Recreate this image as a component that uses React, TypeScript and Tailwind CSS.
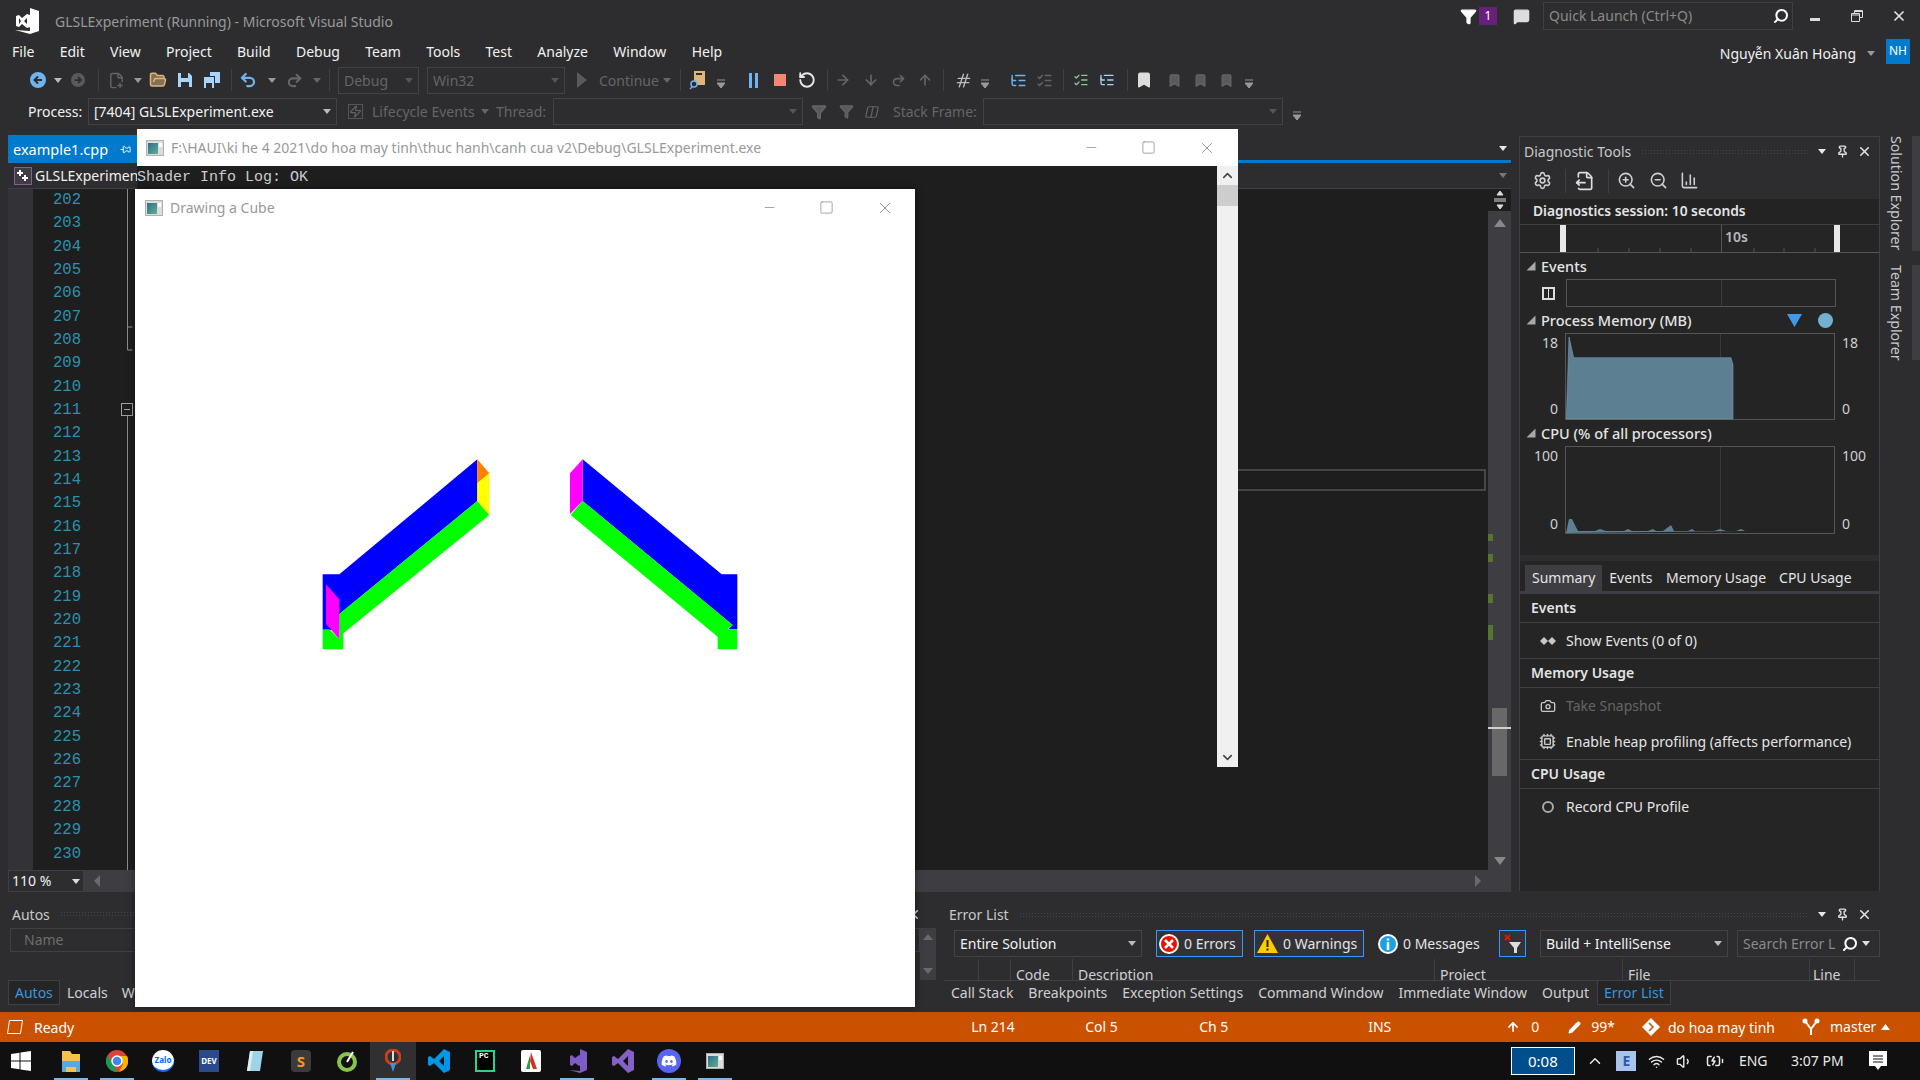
import React from 'react';
import { Settings, ZoomIn, ZoomOut, Search, Undo2, Redo2, RotateCcw, ArrowRight, ArrowDown, ArrowUp, Bookmark, Filter, Pin, X, Minus, Square, FolderOpen, FilePlus2, ChevronUp, ChevronDown, Wifi, Volume1, Pencil, ListTree, ListChecks, Hash, Camera, Cpu, BarChart3, FileOutput, MessageSquare, Columns2, BatteryCharging, Zap } from 'lucide-react';
import { FaDiscord } from 'react-icons/fa6';

const UI = "font-['Noto_Sans',sans-serif]";
const MONO = "font-['Liberation_Mono',monospace]";

const Dd = ({ c = '', color = '#c8c8c8' }: { c?: string; color?: string }) => (
    <svg width="8" height="5" viewBox="0 0 8 5" className={`shrink-0 ${c}`}><path d="M0 0h8L4 5z" fill={color} /></svg>
);
const TbDd = ({ c = '' }: { c?: string }) => (
    <svg width="8" height="10" viewBox="0 0 8 10" className={`shrink-0 mt-2 ${c}`}><path d="M0 1h8M0 4h8L4 9z" stroke="#999" fill="#999" strokeWidth="1" /></svg>
);
const Sep = ({ c = '' }: { c?: string }) => <div className={`w-px h-[22px] bg-[#3f3f46] shrink-0 ${c}`} />;
const Slot = ({ c = '', children }: { c?: string; children: React.ReactNode }) => (
    <div className={`w-5 h-5 flex items-center justify-center shrink-0 ${c}`}>{children}</div>
);
const Combo = ({ c = '', text, dim = false }: { c?: string; text?: string; dim?: boolean }) => (
    <div className={`h-[27px] border border-[#434346] flex items-center justify-between pl-[5px] pr-[5px] shrink-0 ${dim ? 'text-[#656565]' : 'text-[#f1f1f1]'} ${c}`}>
        <span className="whitespace-nowrap leading-normal">{text}</span>
        <Dd color={dim ? '#555' : '#bbb'} />
    </div>
);
const AppGlyph = ({ c = '' }: { c?: string }) => (
    <svg width="18" height="16" viewBox="0 0 18 16" className={c}>
        <defs>
            <linearGradient id="glyph" x1="0" x2="1" y1="0" y2="1"><stop offset="0" stopColor="#2f6f8f" /><stop offset="1" stopColor="#5fae8f" /></linearGradient>
        </defs>
        <rect x="0.500" y="0.500" width="17" height="15" fill="#dcdcdc" stroke="#b0b0b0" />
        <rect x="2" y="3" width="10" height="11" fill="url(#glyph)" />
        <rect x="13" y="3" width="3" height="4" fill="#fff" />
    </svg>
);
const WinControls = ({ c = '' }: { c?: string }) => (
    <div className={`flex items-center gap-[42px] text-[#8a8a8a] ${c}`}>
        <Minus size={15} strokeWidth={1.200} />
        <Square size={15} strokeWidth={1.200} />
        <X size={18} strokeWidth={1.200} />
    </div>
);
const Triangle = () => (
    <svg width="10" height="10" viewBox="0 0 10 10" className="shrink-0"><path d="M9.500 0.500v9h-9z" fill="#a8a8a8" /></svg>
);
const PanelHead = ({ title, c = '' }: { title: string; c?: string }) => (
    <div className={`flex items-center text-[#e0e0e0] ${c}`}>
        <span className="text-[14px] text-[#c8c8c8] whitespace-nowrap leading-normal">{title}</span>
        <div className="flex-1 mx-[10px] h-[6px] bg-[radial-gradient(#46464a_1px,transparent_1px)] bg-[length:3px_3px]" />
        <Dd c="mr-[10px]" color="#e8e8e8" />
        <Pin size={13} strokeWidth={2.500} className="mr-[8px]" />
        <X size={15} strokeWidth={2.500} />
    </div>
);
const Section = ({ title }: { title: string }) => (
    <div className="h-[29px] border-b border-[#3f3f46] flex items-center pl-[11px] font-semibold text-[14px] text-[#e4e4e4]">{title}</div>
);
const Action = ({ text, icon, dim = false, c = '' }: { text: string; icon: React.ReactNode; dim?: boolean; c?: string }) => (
    <div className={`flex items-center h-[36px] pl-[19px] text-[14px] ${dim ? 'text-[#656565]' : 'text-[#e4e4e4]'} ${c}`}>
        <div className="w-[17px] flex justify-center text-[#c8c8c8] mr-[10px]">{icon}</div>
        {text}
    </div>
);
const Label = ({ text, children }: { text: string; children?: React.ReactNode }) => (
    <div className="flex items-center h-[26px] pl-[6px] gap-[5px] text-[#e4e4e4] text-[14.500px] font-medium"><Triangle />{text}{children}</div>
);
const TbIcon = ({ children, bar = false, active = false, c = '' }: { children: React.ReactNode; bar?: boolean; active?: boolean; c?: string }) => (
    <div className={`relative w-[46px] h-[38px] flex items-center justify-center ${active ? 'bg-[#303032]' : ''} ${c}`}>
        {children}
        {bar && <div className="absolute bottom-0 left-[6px] right-[6px] h-[2px] bg-[#76b9ed]" />}
    </div>
);

const LINES = Array.from({ length: 29 }, (_, i) => 202 + i);

const ErrBtn = ({ c, border = true, children }: { c: string; border?: boolean; children: React.ReactNode }) => (
    <div className={`h-[27px] flex items-center shrink-0 text-[#e4e4e4] ${border ? 'border border-[#3399ff] bg-[#333337]' : ''} ${c}`}>{children}</div>
);

export default function App() {
    return (
        <div className={`w-[1920px] h-[1080px] overflow-hidden relative bg-[#2d2d30] flex flex-col text-[14px] leading-none ${UI}`}>
            {/* title bar */}
            <div className="h-[36px] flex items-center shrink-0 pb-[4px]">
                <svg width="30" height="28" viewBox="0 0 30 28" className="ml-[12px] mt-[10px]">
                    <path d="M18 1l9 3v20l-9 3-15-4 15 1zM4 9l3-1 3 3 5-4 3 1v12l-3 1-5-4-3 3-3-1zM7 11v6l2-3zM15 11l-3 3 3 3z" fill="#fff" fillRule="evenodd" />
                </svg>
                <span className="ml-[13px] mt-[12px] text-[14px] text-[#999]">GLSLExperiment (Running) - Microsoft Visual Studio</span>
                <Filter size={17} fill="#fff" color="#fff" className="ml-auto mr-[2px]" />
                <div className="w-[18px] h-[18px] bg-[#68217a] text-white flex items-center justify-center text-[12px] mr-[16px]">1</div>
                <MessageSquare size={17} fill="#ddd" color="#ddd" className="mr-[13px]" />
                <div className="w-[250px] h-[28px] border border-[#3f3f46] flex items-center justify-between pl-[5px] pr-[3px] text-[#8a8a8a]">
                    Quick Launch (Ctrl+Q)
                    <Search size={16} color="#fff" strokeWidth={3} className="-scale-x-100" />
                </div>
                <div className="w-[10px] h-[3px] bg-[#ddd] ml-[17px] mt-[7px]" />
                <svg width="12" height="12" viewBox="0 0 12 12" className="ml-[31px]"><path d="M3.500 3V.500h8v7H9M.500 3.500h8v8h-8zM.500 5h8M3.500 1.500h8" fill="none" stroke="#ddd" /></svg>
                <X size={16} color="#e8e8e8" strokeWidth={2.500} className="ml-[28px] mr-[13px]" />
            </div>
            {/* menu */}
            <div className="h-[30px] flex items-center shrink-0 text-[#f1f1f1] pl-[12px]">
                {['File', 'Edit', 'View', 'Project', 'Build', 'Debug', 'Team', 'Tools', 'Test', 'Analyze', 'Window', 'Help'].map(m => (
                    <span key={m} className="mr-[25.300px] leading-normal">{m}</span>
                ))}
                <span className="ml-auto mt-[5px] leading-normal">Nguyễn Xuân Hoàng</span>
                <Dd c="ml-[11px] mt-[5px]" color="#999" />
                <div className="w-[24px] h-[25px] bg-[#007acc] text-white text-[12px] flex items-center justify-center ml-[11px] mr-[10px]">NH</div>
            </div>
            {/* toolbar 1 */}
            <div className="h-[30px] flex items-center shrink-0 text-[#656565] pb-[2px]">
                <Slot c="ml-[28px]"><svg width="16" height="16" viewBox="0 0 16 16"><circle cx="8" cy="8" r="8" fill="#6fb4ee" /><path d="M12 8H5M8 4.500 4.500 8 8 11.500" stroke="#2d2d30" strokeWidth="2" fill="none" /></svg></Slot>
                <Dd c="ml-[6px]" color="#bbb" />
                <Slot c="ml-[6px]"><svg width="14" height="14" viewBox="0 0 16 16"><circle cx="8" cy="8" r="8" fill="#5a5a5a" /><path d="M4 8h7M8 4.500 11.500 8 8 11.500" stroke="#2d2d30" strokeWidth="2" fill="none" /></svg></Slot>
                <Sep c="ml-[10px]" />
                <Slot c="ml-[7px]"><FilePlus2 size={17} /></Slot>
                <Dd c="ml-[8px]" color="#999" />
                <Slot c="ml-[6px]"><FolderOpen size={18} color="#dcb67a" fill="#dcb67a" fillOpacity={0.500} /></Slot>
                <Slot c="ml-[7px]"><svg width="16" height="16" viewBox="0 0 16 16"><path d="M1 1h11l3 3v11H1z" fill="#a6d4fa" /><path d="M4 1h7v5H4zM4 10h8v5H4z" fill="#2d2d30" /></svg></Slot>
                <Slot c="ml-[7px]"><svg width="18" height="18" viewBox="0 0 18 18"><path d="M1 6h10v11H1z" fill="#a6d4fa" /><path d="M3 12h6v5H3z" fill="#2d2d30" /><path d="M7 1h10v11h-5V5H7z" fill="#a6d4fa" /></svg></Slot>
                <Sep c="ml-[9px]" />
                <Slot c="ml-[6px]"><Undo2 size={18} color="#6fb4ee" strokeWidth={3} /></Slot>
                <Dd c="ml-[10px]" color="#999" />
                <Slot c="ml-[8px]"><Redo2 size={17} strokeWidth={3} /></Slot>
                <Dd c="ml-[9px]" color="#666" />
                <Sep c="ml-[8px]" />
                <Combo c="ml-[8px] w-[81px]" text="Debug" dim />
                <Combo c="ml-[8px] w-[138px]" text="Win32" dim />
                <svg width="12" height="16" viewBox="0 0 12 16" className="ml-[11px]"><path d="M1 0l10 8-10 8z" fill="#5a5a5a" /></svg>
                <span className="ml-[11px] w-[59px] leading-normal">Continue</span>
                <Dd c="ml-[5px]" color="#666" />
                <Sep c="ml-[9px]" />
                <Slot c="ml-[7px]"><svg width="18" height="20" viewBox="0 0 18 20"><path d="M5 1h11v14H5z" fill="#dcb67a" /><path d="M7 3h6v2H7z" fill="#2d2d30" /><circle cx="5" cy="14" r="3" fill="#2d2d30" stroke="#6fb4ee" strokeWidth="1.500" /><path d="M3 17l-2 2" stroke="#6fb4ee" strokeWidth="1.500" /></svg></Slot>
                <TbDd c="ml-[9px]" />
                <div className="ml-[18px] w-5 flex justify-center gap-[3px]"><div className="w-[3px] h-[15px] bg-[#6fb4ee]" /><div className="w-[3px] h-[15px] bg-[#6fb4ee]" /></div>
                <div className="ml-[11px] mr-[4px] w-[12px] h-[12px] bg-[#f48771]" />
                <Slot c="ml-[7px]"><RotateCcw size={18} color="#e8e8e8" strokeWidth={2.500} /></Slot>
                <Sep c="ml-[10px]" />
                <Slot c="ml-[5px]"><ArrowRight size={16} strokeWidth={2.500} /></Slot>
                <Slot c="ml-[8px]"><ArrowDown size={16} strokeWidth={2.500} /></Slot>
                <Slot c="ml-[7px]"><Redo2 size={15} strokeWidth={2.500} /></Slot>
                <Slot c="ml-[7px]"><ArrowUp size={16} strokeWidth={2.500} /></Slot>
                <Sep c="ml-[8px]" />
                <Slot c="ml-[9px]"><Hash size={17} color="#bbb" className="-skew-x-12" /></Slot>
                <TbDd c="ml-[8px]" />
                <Slot c="ml-[19px]"><ListTree size={17} color="#6fb4ee" /></Slot>
                <Slot c="ml-[6px]"><ListChecks size={17} /></Slot>
                <Sep c="ml-[9px]" />
                <Slot c="ml-[7px]"><ListChecks size={16} color="#8fc48f" /></Slot>
                <Slot c="ml-[6px]"><ListTree size={16} color="#a6d4fa" /></Slot>
                <Sep c="ml-[10px]" />
                <Slot c="ml-[6px]"><Bookmark size={18} fill="#ddd" color="#ddd" /></Slot>
                <Slot c="ml-[10px]"><Bookmark size={15} fill="#5a5a5a" /></Slot>
                <Slot c="ml-[6px]"><Bookmark size={15} fill="#5a5a5a" /></Slot>
                <Slot c="ml-[6px]"><Bookmark size={15} fill="#5a5a5a" /></Slot>
                <TbDd c="ml-[9px]" />
            </div>
            {/* toolbar 2 */}
            <div className="h-[31px] flex items-center shrink-0 text-[#656565]">
                <span className="ml-[28px] w-[52px] text-[#f1f1f1] leading-normal">Process:</span>
                <Combo c="ml-[8px] w-[249px]" text="[7404] GLSLExperiment.exe" />
                <Slot c="ml-[8px]"><Zap size={15} className="border border-[#555]" /></Slot>
                <span className="ml-[7px] w-[103px] whitespace-nowrap leading-normal">Lifecycle Events</span>
                <Dd c="ml-[6px]" color="#666" />
                <span className="ml-[7px] w-[49px] leading-normal">Thread:</span>
                <Combo c="ml-[8px] w-[250px]" dim />
                <Slot c="ml-[6px]"><Filter size={16} fill="#5a5a5a" /></Slot>
                <Slot c="ml-[7px]"><Filter size={15} fill="#5a5a5a" /></Slot>
                <Slot c="ml-[6px]"><Columns2 size={14} className="-skew-x-12" /></Slot>
                <span className="ml-[11px] w-[82px] whitespace-nowrap leading-normal">Stack Frame:</span>
                <Combo c="ml-[8px] w-[300px]" dim />
                <TbDd c="ml-[10px]" />
            </div>
            {/* workspace */}
            <div className="flex-1 flex min-h-0">
                <div className="w-[1880px] flex flex-col">
                    <div className="h-[773px] flex shrink-0">
                        {/* document well */}
                        <div className="w-[1503px] ml-[8px] flex flex-col">
                            <div className="h-[36px] flex items-end border-b-[3px] border-[#007acc] pr-[4px]">
                                <div className="w-[129px] h-[25px] bg-[#007acc] text-white flex items-center pl-[5px] pt-[4px] text-[14.500px]">
                                    <span className="leading-normal">example1.cpp</span>
                                    <Pin size={11} className="ml-[12px] rotate-90" />
                                </div>
                                <Dd c="ml-auto mb-[9px]" color="#e8e8e8" />
                            </div>
                            <div className="h-[26px] flex items-center border-b border-[#3f3f46] pr-[4px] text-[#f1f1f1]">
                                <svg width="18" height="18" viewBox="0 0 18 18" className="ml-[6px]"><rect x="0.500" y="0.500" width="17" height="17" fill="#3e3e42" stroke="#8a5a9a" /><path d="M6 3v6M3 6h6M11 8v6M8 11h6" stroke="#fff" strokeWidth="2" /></svg>
                                <span className="ml-[3px] leading-normal">GLSLExperiment</span>
                                <Dd c="ml-auto" color="#777" />
                            </div>
                            <div className="h-[681px] flex bg-[#1e1e1e]">
                                <div className="w-[25px] bg-[#333337]" />
                                <div className={`w-[48px] text-[15.600px] text-[#2b91af] text-right ${MONO}`}>
                                    {LINES.map(n => <div key={n} className="h-[23.350px] flex items-center justify-end">{n}</div>)}
                                </div>
                                <svg width="60" height="681" viewBox="0 0 60 681" className="shrink-0">
                                    <path d="M46.500 0v161h5M46.500 138h5M46.500 227v454" stroke="#8a8a8a" fill="none" />
                                    <rect x="40.500" y="214.500" width="11" height="12" stroke="#a0a0a0" fill="none" />
                                    <path d="M43 220.500h6" stroke="#a0a0a0" />
                                </svg>
                                <div className="flex-1 flex flex-col">
                                    <div className="h-[280px]" />
                                    <div className="h-[22px] border-2 border-[#464646] mr-[2px]" />
                                </div>
                                <div className="w-[23px] bg-[#3e3e42] flex flex-col items-center relative">
                                    <div className="w-full h-[22px] bg-[#1e1e1e] flex items-center justify-center"><svg width="12" height="20" viewBox="0 0 12 20"><path d="M6 1l3 4H3zM6 19l3-4H3zM0 9h12M0 11h12" stroke="#ddd" fill="#ddd" /></svg></div>
                                    <svg width="12" height="8" viewBox="0 0 12 8" className="mt-[8px]"><path d="M6 0l6 8H0z" fill="#888" /></svg>
                                    <div className="w-[15px] h-[68px] bg-[#686868] mt-[481px]" />
                                    <svg width="12" height="8" viewBox="0 0 12 8" className="mt-[81px]"><path d="M6 8l6-8H0z" fill="#888" /></svg>
                                    {/* overview marks */}
                                    <div className="absolute left-0 top-[345px] w-[5px] h-[7px] bg-[#577430]" />
                                    <div className="absolute left-0 top-[365px] w-[5px] h-[8px] bg-[#577430]" />
                                    <div className="absolute left-0 top-[405px] w-[5px] h-[9px] bg-[#577430]" />
                                    <div className="absolute left-0 top-[436px] w-[5px] h-[15px] bg-[#577430]" />
                                    <div className="absolute left-0 top-[538px] w-full h-[2px] bg-[#d0d0d0]" />
                                </div>
                            </div>
                            <div className="h-[22px] bg-[#3e3e42] flex items-center relative">
                                <div className="w-[76px] h-full bg-[#2d2d30] border border-[#3f3f46] text-[#f1f1f1] flex items-center justify-between px-[3px]">110 %<Dd color="#ddd" /></div>
                                <svg width="6" height="12" viewBox="0 0 6 12" className="ml-[10px]"><path d="M6 0v12L0 6z" fill="#6a6a6a" /></svg>
                                <svg width="6" height="12" viewBox="0 0 6 12" className="ml-auto mr-[30px]"><path d="M0 0v12l6-6z" fill="#6a6a6a" /></svg>
                            </div>
                        </div>
                        {/* diagnostic tools */}
                        <div className="w-[361px] ml-[8px] mt-[9px] mb-[9px] bg-[#252526] border-x border-[#3f3f46] flex flex-col">
                            <div className="bg-[#2d2d30] border-t border-[#3f3f46] pl-[4px] pr-[7px] pb-[1px]"><PanelHead title="Diagnostic Tools" c="h-[29px]" /></div>
                            <div className="h-[32px] bg-[#2d2d30] flex items-center text-[#d0d0d0] pb-[5px]">
                                <Settings size={19} className="ml-[13px]" />
                                <div className="w-px h-[24px] bg-[#3f3f46] ml-[13px]" />
                                <FileOutput size={20} color="#ddd" className="ml-[9px]" />
                                <div className="w-px h-[24px] bg-[#3f3f46] ml-[13px]" />
                                <ZoomIn size={19} className="ml-[8px]" />
                                <ZoomOut size={19} className="ml-[13px]" />
                                <BarChart3 size={19} className="ml-[12px]" />
                            </div>
                            <div className="h-[26px] bg-[#232324] flex items-center pl-[13px] pb-[1px] font-semibold text-[13.800px] text-[#e4e4e4] border-b border-[#3f3f46]">Diagnostics session: 10 seconds</div>
                            <div className="h-[28px] flex border-b border-[#555] relative">
                                <div className="w-[6px] h-full bg-[#e8e8e8] ml-[40px]" />
                                <div className="w-px bg-[#555] ml-[155px]" />
                                <span className="ml-[3px] mt-[5px] text-[14px] font-semibold text-[#b8b8b8]">10s</span>
                                <div className="w-[6px] h-full bg-[#e8e8e8] ml-[86px]" />
                                <svg width="361" height="4" viewBox="0 0 361 4" className="absolute left-0 bottom-0"><path d="M78 0v4M109 0v4M140 0v4M171 0v4M234 0v4M264 0v4M295 0v4" stroke="#555" /></svg>
                            </div>
                            <Label text="Events" />
                            <div className="flex items-center">
                                <svg width="13" height="13" viewBox="0 0 13 13" className="ml-[22px]"><rect x="1" y="1" width="11" height="11" fill="none" stroke="#ddd" strokeWidth="2" /><path d="M6.500 1v11" stroke="#ddd" /></svg>
                                <div className="ml-[11px] w-[270px] h-[28px] border border-[#555] flex"><div className="w-[155px] border-r border-[#3a3a3a]" /></div>
                            </div>
                            <Label text="Process Memory (MB)">
                                <svg width="15" height="13" viewBox="0 0 15 13" className="ml-auto"><path d="M0 0h15l-7.500 13z" fill="#3d9bee" /></svg>
                                <div className="w-[15px] h-[15px] rounded-full bg-[#76b0d0] ml-[11px] mr-[46px]" />
                            </Label>
                            <div className="flex">
                                <div className="w-[45px] h-[86px] flex flex-col justify-between items-end pr-[7px] py-[3px] text-[14px] text-[#d0d0d0]"><span>18</span><span>0</span></div>
                                <svg width="270" height="87" viewBox="0 0 270 87" className="shrink-0">
                                    <rect x="0.500" y="0.500" width="269" height="86" fill="#242425" stroke="#555" />
                                    <path d="M155.500 1v85" stroke="#3a3a3a" />
                                    <path d="M1.300 86 4 4l4.700 20.700H166l2 7V86z" fill="#5c7f92" stroke="#7d9bac" strokeWidth="0.600" />
                                </svg>
                                <div className="pl-[7px] h-[86px] flex flex-col justify-between py-[3px] text-[14px] text-[#d0d0d0]"><span>18</span><span>0</span></div>
                            </div>
                            <Label text="CPU (% of all processors)" />
                            <div className="flex">
                                <div className="w-[45px] h-[88px] flex flex-col justify-between items-end pr-[7px] py-[3px] text-[14px] text-[#d0d0d0]"><span>100</span><span>0</span></div>
                                <svg width="270" height="88" viewBox="0 0 270 88" className="shrink-0">
                                    <rect x="0.500" y="0.500" width="269" height="87" fill="#242425" stroke="#555" />
                                    <path d="M155.500 1v86" stroke="#3a3a3a" />
                                    <path d="M1 87l3-14 3 0 6 12h17l5-2 6 2h18l4-2 4 2h16l5-2 3 2h7l8-6 3 6h14l4-2 3 2h19l6-2 6 2h10l5-2 4 2v0z" fill="#5c7f92" />
                                </svg>
                                <div className="pl-[7px] h-[88px] flex flex-col justify-between py-[3px] text-[14px] text-[#d0d0d0]"><span>100</span><span>0</span></div>
                            </div>
                            <div className="h-[27px] border-b-[6px] border-[#2d2d30]" />
                            <div className="h-[33px] flex items-end pl-[5px] border-b-[3px] border-[#3e3e42] text-[14px] text-[#e4e4e4]">
                                <span className="bg-[#3e3e42] h-[26px] flex items-center px-[7px]">Summary</span>
                                <span className="h-[26px] flex items-center px-[7px]">Events</span>
                                <span className="h-[26px] flex items-center px-[6.500px]">Memory Usage</span>
                                <span className="h-[26px] flex items-center px-[6.500px]">CPU Usage</span>
                            </div>
                            <Section title="Events" />
                            <Action text="Show Events (0 of 0)" c="border-b border-[#3f3f46]" icon={<svg width="16" height="8" viewBox="0 0 16 8"><path d="M0 4l4-4 4 4 4-4 4 4-4 4-4-4-4 4z" fill="#c8c8c8" /></svg>} />
                            <Section title="Memory Usage" />
                            <Action text="Take Snapshot" dim icon={<Camera size={16} />} />
                            <Action text="Enable heap profiling (affects performance)" c="border-b border-[#3f3f46] h-[35px]" icon={<Cpu size={17} />} />
                            <Section title="CPU Usage" />
                            <Action text="Record CPU Profile" icon={<div className="w-[12px] h-[12px] rounded-full border-2 border-[#a8a8a8]" />} />
                        </div>
                    </div>
                    {/* bottom panels */}
                    <div className="flex-1 flex">
                        <div className="w-[928px] ml-[8px] flex flex-col relative">
                            <PanelHead title="Autos" c="pr-[15px] pl-[4px] h-[28px]" />
                            <div className="flex h-[52px]">
                                <div className="flex-1"><div className="h-[24px] border border-[#3f3f46] ml-[2px] flex items-center pl-[13px] text-[#6d6d6d]">Name</div></div>
                                <div className="w-[16px] bg-[#3e3e42] flex flex-col items-center justify-between py-[6px]">
                                    <svg width="10" height="6" viewBox="0 0 10 6"><path d="M5 0l5 6H0z" fill="#6a6a6a" /></svg>
                                    <svg width="10" height="6" viewBox="0 0 10 6"><path d="M5 6l5-6H0z" fill="#6a6a6a" /></svg>
                                </div>
                            </div>
                            <div className="h-[25px] flex items-center text-[#d0d0d0]">
                                <span className="w-[52px] h-full border border-[#3f3f46] bg-[#252526] text-[#3a96dd] flex items-center pl-[6px]">Autos</span>
                                <span className="ml-[7px]">Locals</span>
                                <span className="ml-[14px]">Watch 1</span>
                            </div>
                        </div>
                        <div className="w-[936px] ml-[8px] flex flex-col">
                            <PanelHead title="Error List" c="pr-[8px] pl-[5px] h-[29px]" />
                            <div className="h-[29px] flex items-center">
                                <Combo c="ml-[10px] w-[188px]" text="Entire Solution" />
                                <ErrBtn c="ml-[14px] w-[87px] pl-[2px] gap-[5px]"><svg width="20" height="20" viewBox="0 0 20 20"><circle cx="10" cy="10" r="10" fill="#fff" /><circle cx="10" cy="10" r="8" fill="#e51400" /><path d="M6 6l8 8M14 6l-8 8" stroke="#fff" strokeWidth="2.500" /></svg>0 Errors</ErrBtn>
                                <ErrBtn c="ml-[11px] w-[110px] pl-[2px] gap-[5px]"><svg width="21" height="19" viewBox="0 0 21 19"><path d="M10.500 0 21 19H0z" fill="#ffcc00" /><path d="M10.500 6v7M10.500 14.500v2" stroke="#222" strokeWidth="2" /></svg>0 Warnings</ErrBtn>
                                <ErrBtn border={false} c="ml-[14px] w-[103px] gap-[5px]"><svg width="20" height="20" viewBox="0 0 20 20"><circle cx="10" cy="10" r="10" fill="#fff" /><circle cx="10" cy="10" r="8" fill="#1ba1e2" /><path d="M10 4.500v2M10 8v8" stroke="#fff" strokeWidth="2.500" /></svg>0 Messages</ErrBtn>
                                <ErrBtn c="ml-[18px] w-[27px] justify-center"><svg width="17" height="19" viewBox="0 0 17 19"><path d="M1 1l5 5M6 1 1 6" stroke="#e51400" strokeWidth="2" /><path d="M5 8h12l-4 6v5h-3v-5z" fill="#ddd" /></svg></ErrBtn>
                                <Combo c="ml-[14px] w-[188px]" text="Build + IntelliSense" />
                                <div className="ml-[9px] flex-1 h-[27px] border border-[#434346] flex items-center pl-[5px] text-[#8a8a8a] whitespace-nowrap">Search Error L<Search size={16} color="#fff" strokeWidth={3} className="ml-[7px] shrink-0 -scale-x-100" /><Dd c="ml-[4px]" color="#ddd" /></div>
                            </div>
                            <div className="h-[22px] mt-[1px] flex overflow-hidden text-[#d0d0d0] border-b border-[#3f3f46]">
                                <div className="w-[35px] border-r border-[#3f3f46]" />
                                <div className="w-[32px] border-r border-[#3f3f46]" />
                                <div className="w-[62px] border-r border-[#3f3f46] pl-[5px] pt-[9px]">Code</div>
                                <div className="w-[362px] border-r border-[#3f3f46] pl-[5px] pt-[9px]">Description</div>
                                <div className="w-[188px] border-r border-[#3f3f46] pl-[5px] pt-[9px]">Project</div>
                                <div className="w-[187px] border-r border-[#3f3f46] pl-[5px] pt-[9px]">File</div>
                                <div className="w-[45px] border-r border-[#3f3f46] pl-[3px] pt-[9px]">Line</div>
                            </div>
                            <div className="h-[24px] flex items-center text-[#d0d0d0] pl-[7px] gap-[15px] whitespace-nowrap">
                                <span>Call Stack</span><span>Breakpoints</span><span>Exception Settings</span><span>Command Window</span><span>Immediate Window</span><span>Output</span>
                                <span className="h-full flex items-center px-[6px] -ml-[7px] bg-[#252526] border-x border-b border-[#3f3f46] text-[#3a96dd]">Error List</span>
                            </div>
                        </div>
                    </div>
                </div>
                <div className="flex-1 flex flex-col items-start pt-[9px] text-[#c8c8c8] text-[14.200px] leading-normal">
                    <div className="h-[115px] w-full flex">
                        <span className="flex-1 [writing-mode:vertical-rl] whitespace-nowrap flex items-center justify-start">Solution Explorer</span>
                        <div className="w-[8px] bg-[#3e3e42]" />
                    </div>
                    <div className="h-[95px] w-full flex mt-[14px]">
                        <span className="flex-1 [writing-mode:vertical-rl] whitespace-nowrap flex items-center justify-start">Team Explorer</span>
                        <div className="w-[8px] bg-[#3e3e42]" />
                    </div>
                </div>
            </div>
            {/* status bar */}
            <div className="h-[30px] bg-[#ca5100] text-white flex items-center shrink-0 whitespace-nowrap">
                <svg width="18" height="14" viewBox="0 0 18 14" className="ml-[6px]"><path d="M3.500.500h13l-2 13h-13z" fill="none" stroke="#fff" /></svg>
                <span className="ml-[10px] leading-normal">Ready</span>
                <span className="ml-[897px] w-[114px]">Ln 214</span>
                <span className="w-[114px]">Col 5</span>
                <span className="w-[169px]">Ch 5</span>
                <span className="w-[136px]">INS</span>
                <ArrowUp size={14} strokeWidth={3} className="w-[18px]" />
                <span className="ml-[9px]">0</span>
                <Pencil size={13} fill="#fff" className="ml-[29px]" />
                <span className="ml-[10px]">99*</span>
                <svg width="18" height="18" viewBox="0 0 18 18" className="ml-[27px]"><path d="M9 0l9 9-9 9-9-9z" fill="#fff" /><path d="M7 5l4 4-4 4" stroke="#ca5100" strokeWidth="1.500" fill="none" /></svg>
                <span className="ml-[8px] leading-normal">do hoa may tinh</span>
                <svg width="18" height="18" viewBox="0 0 18 18" className="ml-[27px]"><path d="M3 3l6 8v6M15 3 9 11" stroke="#fff" strokeWidth="2" fill="none" /><circle cx="3" cy="3" r="2.500" fill="#fff" /><circle cx="15" cy="3" r="2.500" fill="#fff" /></svg>
                <span className="ml-[10px]">master</span>
                <svg width="9" height="6" viewBox="0 0 9 6" className="ml-[5px]"><path d="M4.500 0 9 6H0z" fill="#fff" /></svg>
            </div>
            {/* taskbar */}
            <div className="h-[38px] bg-[#101010] flex items-center shrink-0 text-[#e8e8e8]">
                <svg width="20" height="20" viewBox="0 0 20 20" className="ml-[11px]"><path d="M0 3l8.500-1.200V9.500H0zM9.500 1.600 20 0v9.500H9.500zM0 10.500h8.500v7.700L0 17zM9.500 10.500H20V20L9.500 18.400z" fill="#fff" /></svg>
                <TbIcon bar c="ml-[17px]"><svg width="20" height="22" viewBox="0 0 20 22"><path d="M1 1h8l2 3h8v18H1z" fill="#f4c24d" /><path d="M1 11h18v11h-4v-5H5v5H1z" fill="#5aa8df" /></svg></TbIcon>
                <TbIcon bar><svg width="22" height="22" viewBox="0 0 22 22"><circle cx="11" cy="11" r="11" fill="#db4437" /><path d="M11 22a11 11 0 0 1-9.500-16.500L7 14l4 8z" fill="#0f9d58" /><path d="M11 6h10a11 11 0 0 1-8 15.800L17 14z" fill="#f4b400" /><circle cx="11" cy="11" r="5" fill="#4285f4" stroke="#fff" strokeWidth="1.500" /></svg></TbIcon>
                <TbIcon><div className="w-[22px] h-[22px] rounded-full bg-white border-b-2 border-[#0068ff] text-[#0068ff] text-[8px] font-bold flex items-center justify-center">Zalo</div></TbIcon>
                <TbIcon><div className="w-[20px] h-[22px] bg-[#2a4a8a] text-white text-[8px] font-bold flex items-center justify-center">DEV</div></TbIcon>
                <TbIcon><svg width="20" height="22" viewBox="0 0 20 22"><path d="M5 1h13l-3 20H2z" fill="#9fd3e8" /><path d="M5 1h3L5 21H2z" fill="#dfeef5" /></svg></TbIcon>
                <TbIcon><div className="w-[20px] h-[22px] bg-[#3b3b3b] rounded-sm text-[#f89820] font-bold text-[15px] flex items-center justify-center">S</div></TbIcon>
                <TbIcon><svg width="20" height="22" viewBox="0 0 20 22"><circle cx="10" cy="12" r="8" fill="none" stroke="#8bc34a" strokeWidth="4" /><path d="M10 12l6-10" stroke="#fff" strokeWidth="2" /></svg></TbIcon>
                <TbIcon bar active><svg width="16" height="24" viewBox="0 0 16 24"><circle cx="8" cy="8" r="7" fill="none" stroke="#c8401f" strokeWidth="3" /><path d="M8 2v10" stroke="#ddd" strokeWidth="2" /><path d="M5 14h6l-3 9z" fill="#3a96dd" /></svg></TbIcon>
                <TbIcon><svg width="22" height="24" viewBox="0 0 22 24"><path d="M16 0l6 3v18l-6 3L6 14l-4 3-2-1V8l2-1 4 3zM16 7l-5 5 5 5z" fill="#0098e6" fillRule="evenodd" /></svg></TbIcon>
                <TbIcon><div className={`w-[20px] h-[22px] bg-black border-2 border-[#21d789] text-white text-[8px] font-bold pl-[2px] ${MONO}`}>PC</div></TbIcon>
                <TbIcon><svg width="20" height="22" viewBox="0 0 20 22"><rect width="20" height="22" rx="2" fill="#fff" /><path d="M10 2l6 17h-4l-3-8z" fill="#d92d20" /><path d="M9 5l-4 14h4z" fill="#2e9e44" /></svg></TbIcon>
                <TbIcon bar><svg width="20" height="24" viewBox="0 0 20 24"><path d="M13 0l7 3v18l-7 3-11-3 11 1zM3 7l2-1 3 3 4-3 2 1v9l-2 1-4-3-3 3-2-1z" fill="#7d5cc6" /></svg></TbIcon>
                <TbIcon><svg width="22" height="24" viewBox="0 0 22 24"><path d="M16 0l6 3v18l-6 3L6 14l-4 3-2-1V8l2-1 4 3zM16 7l-5 5 5 5z" fill="#8661c5" fillRule="evenodd" /></svg></TbIcon>
                <TbIcon bar><div className="w-[24px] h-[24px] rounded-full bg-[#5865f2] flex items-center justify-center"><FaDiscord size={16} color="#fff" /></div></TbIcon>
                <TbIcon bar><AppGlyph /></TbIcon>
                <div className="ml-auto flex items-center">
                    <div className="w-[64px] h-[28px] border border-white bg-[#004e8c] flex items-center justify-center text-[15px] text-white">0:08</div>
                    <ChevronUp size={18} className="ml-[11.500px]" />
                    <div className="ml-[12px] w-[20px] h-[20px] bg-[#a9c4ec] text-[#2a5aa8] font-bold flex items-center justify-center">E</div>
                    <Wifi size={17} className="ml-[12px]" />
                    <Volume1 size={17} className="ml-[11px]" />
                    <BatteryCharging size={18} className="ml-[13px]" />
                    <span className="ml-[14.500px]">ENG</span>
                    <span className="ml-[23.500px] w-[56px] whitespace-nowrap">3:07 PM</span>
                    <svg width="20" height="22" viewBox="0 0 20 22" className="ml-[21px] mr-[32px]"><path d="M1 1h18v15h-6l-3 4-3-4H1z" fill="#fff" /><path d="M5 6h10M5 9h10M5 12h10" stroke="#101010" /></svg>
                </div>
            </div>

            {/* console window */}
            <div className="absolute left-[137px] top-[129px] w-[1101px] h-[638px] bg-[#1e1e1e] flex flex-col">
                <div className="h-[37px] bg-white flex items-center text-[#999] text-[14px] shrink-0">
                    <AppGlyph c="ml-[9px]" />
                    <span className="ml-[7px] leading-normal">F:\HAUI\ki he 4 2021\do hoa may tinh\thuc hanh\canh cua v2\Debug\GLSLExperiment.exe</span>
                    <WinControls c="ml-auto mr-[22px]" />
                </div>
                <div className="flex-1 flex min-h-0">
                    <div className={`flex-1 text-[15px] text-[#cccccc] pt-[4px] ${MONO}`}>Shader Info Log: OK</div>
                    <div className="w-[21px] bg-[#f0f0f0] flex flex-col items-center">
                        <ChevronUp size={15} color="#444" strokeWidth={2.500} className="mt-[2px]" />
                        <div className="w-full h-[21px] bg-[#cdcdcd] mt-[2px]" />
                        <ChevronDown size={15} color="#444" strokeWidth={2.500} className="mt-auto mb-[2px]" />
                    </div>
                </div>
            </div>
            {/* cube window */}
            <div className="absolute left-[135px] top-[189px] w-[780px] h-[818px] bg-white shadow-[0_0_6px_rgba(0,0,0,0.5)]">
                <div className="h-[37px] flex items-center text-[#999] text-[14px]">
                    <AppGlyph c="ml-[10px]" />
                    <span className="ml-[7px] leading-normal">Drawing a Cube</span>
                    <WinControls c="ml-auto mr-[21px]" />
                </div>
                <div className="pl-[165px] pt-[214px]">
                    <svg width="460" height="220" viewBox="0 0 1380 660">
                        <path d="M68 403H118L532 58V183L118 522V570H68z" fill="#0000ff" />
                        <path d="M118 522 532 183 568 225 130 580V628H68V568H88L118 598z" fill="#00ff00" />
                        <path d="M78 433 118 478V598L78 552z" fill="#ff00ff" />
                        <path d="M532 58 568 100 532 130z" fill="#ff8000" />
                        <path d="M532 130 568 100V225L532 183z" fill="#ffff00" />
                        <path d="M848 58 1265 403H1312V568H1285L1298 555 848 183z" fill="#0000ff" />
                        <path d="M848 183 1298 555 1283 568H1312V628H1253V590L812 225z" fill="#00ff00" />
                        <path d="M848 58 810 100V222L848 183z" fill="#ff00ff" />
                    </svg>
                </div>
            </div>
        </div>
    );
}
